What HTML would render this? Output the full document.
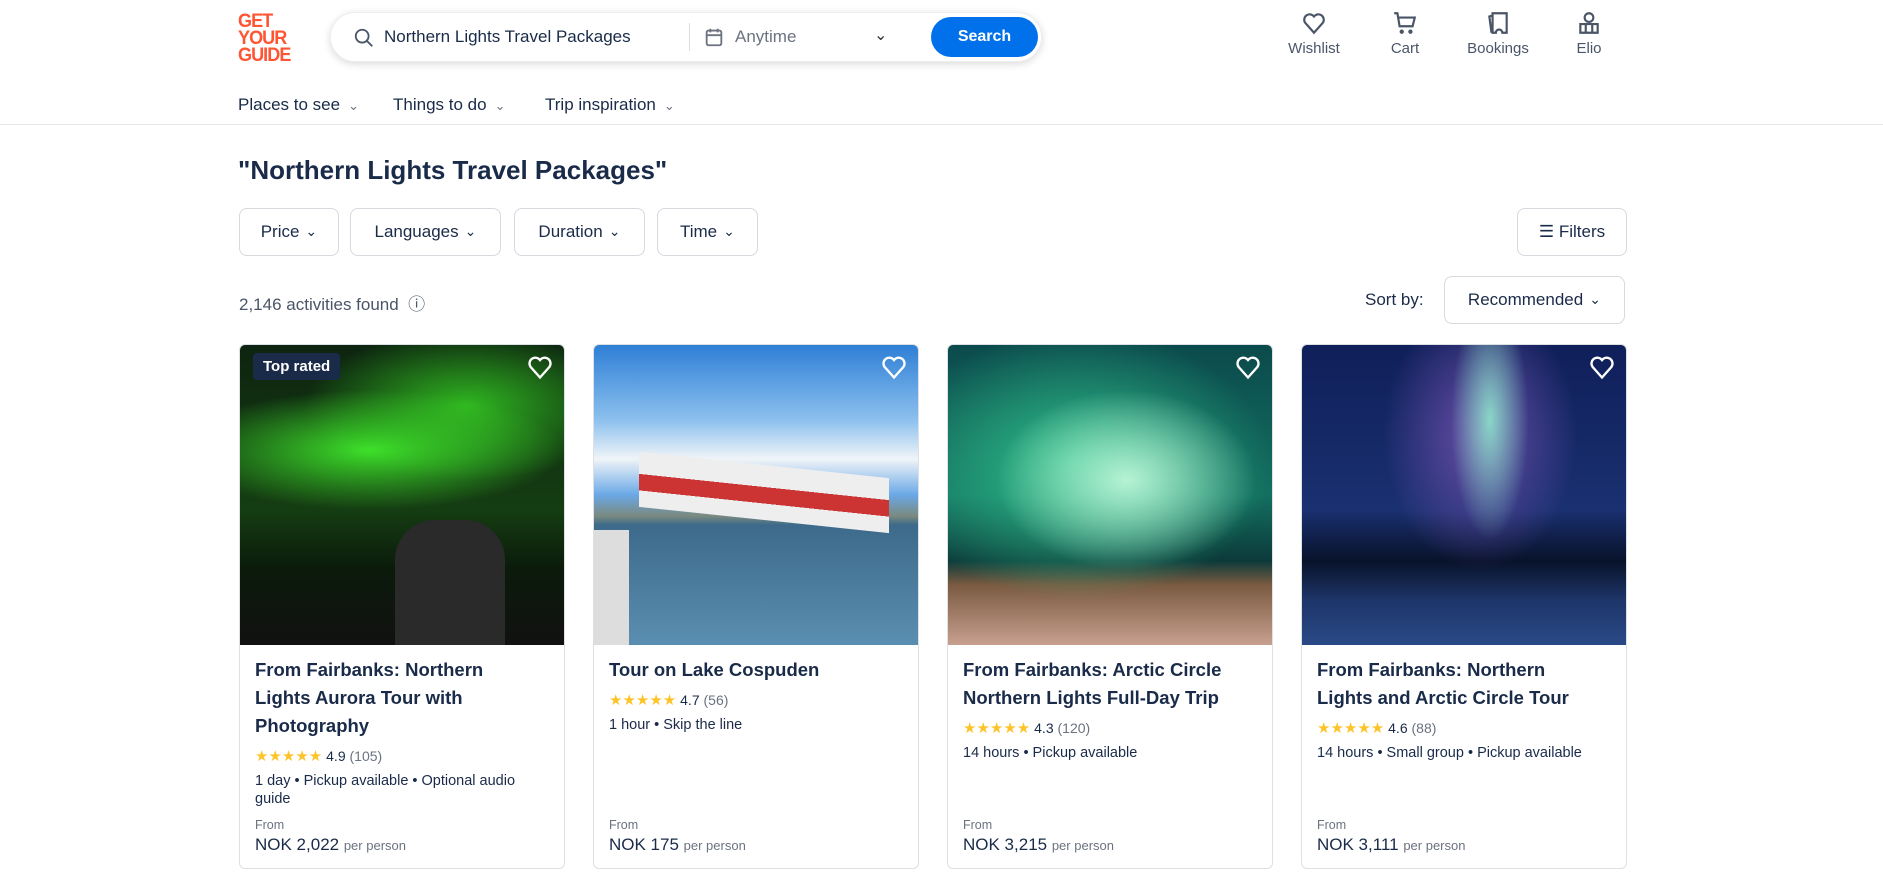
<!DOCTYPE html>
<html><head><meta charset="utf-8"><style>
*{box-sizing:border-box;margin:0;padding:0}
body{width:1883px;height:884px;overflow:hidden;background:#fff;font-family:"Liberation Sans",sans-serif;color:#1a2b49;position:relative}
.a{position:absolute}
.logo{left:238px;top:13px;color:#ff5533;font-weight:900;font-size:19px;line-height:17px;letter-spacing:-1px;transform:scaleX(0.95);transform-origin:left}
.search{left:330px;top:12px;width:712px;height:50px;border-radius:25px;box-shadow:0 2px 8px rgba(0,0,0,.15);border:1px solid #eee;background:#fff}
.nav{top:95px;font-size:17px}
.nav span{color:#6b7280;font-size:13px;margin-left:8px}
.hi{top:10px;text-align:center;font-size:15px;color:#4a5568;width:90px}
.hi svg{display:block;margin:0 auto 4px}
.btn{top:208px;height:48px;border:1px solid #d6d9de;border-radius:8px;font-size:17px;display:flex;align-items:center;justify-content:center;gap:6px}
.card{top:344px;width:326px;height:525px;border:1px solid #dcdfe4;border-radius:6px;overflow:hidden}
.img{height:300px;position:relative}
.ct{padding:11px 15px 0}
.t{font-weight:bold;font-size:18.5px;line-height:28px;white-space:nowrap}
.r{font-size:14px;margin-top:7px;color:#1a2b49}
.r b{color:#fdc42a;font-size:15px;letter-spacing:0;font-weight:normal}
.r i{font-style:normal;color:#6b7280}
.f{font-size:14.5px;margin-top:7px;line-height:18px;white-space:nowrap}
.fr{position:absolute;bottom:36px;left:15px;font-size:12.5px;color:#6b7280}
.p{position:absolute;bottom:13px;left:15px;font-size:17px}
.p span{font-size:13px;color:#6b7280}
.heart{position:absolute;right:10px;top:8px}
</style></head><body>
<div class="a logo">GET<br>YOUR<br>GUIDE</div>
<div class="a search">
<svg class="a" style="left:22px;top:14px" width="22" height="22" viewBox="0 0 24 24" fill="none" stroke="#4a5568" stroke-width="2"><circle cx="10" cy="10" r="7"/><path d="M15 15l6 6"/></svg>
<div class="a" style="left:53px;top:14px;font-size:17px">Northern Lights Travel Packages</div>
<div class="a" style="left:358px;top:10px;width:1px;height:28px;background:#ddd"></div>
<svg class="a" style="left:372px;top:13px" width="22" height="22" viewBox="0 0 24 24" fill="none" stroke="#6b7280" stroke-width="2"><rect x="4" y="5" width="16" height="16" rx="2"/><path d="M4 10h16M8 3v4M16 3v4"/></svg>
<div class="a" style="left:404px;top:14px;font-size:17px;color:#6b7280">Anytime</div>
<div class="a" style="left:543px;top:12px;font-size:16px;color:#333">&#8964;</div>
<div class="a" style="left:600px;top:4px;width:107px;height:40px;border-radius:20px;background:#0071eb;color:#fff;font-weight:bold;font-size:16px;text-align:center;line-height:40px">Search</div>
</div>
<div class="a nav" style="left:238px">Places to see<span>&#8964;</span></div>
<div class="a nav" style="left:393px">Things to do<span>&#8964;</span></div>
<div class="a nav" style="left:545px">Trip inspiration<span>&#8964;</span></div>
<div class="a hi" style="left:1269px"><svg width="26" height="26" viewBox="0 0 24 24" fill="none" stroke="#4a5568" stroke-width="2"><path d="M12 21l-8-9a5 5 0 018-6 5 5 0 018 6z"/></svg>Wishlist</div>
<div class="a hi" style="left:1360px"><svg width="26" height="26" viewBox="0 0 24 24" fill="none" stroke="#4a5568" stroke-width="2"><path d="M2 3h3l2 12h12l2-8H6"/><circle cx="9" cy="20" r="1"/><circle cx="17" cy="20" r="1"/></svg>Cart</div>
<div class="a hi" style="left:1453px"><svg width="26" height="26" viewBox="0 0 24 24" fill="none" stroke="#4a5568" stroke-width="2"><path d="M7 3h13v18h-4a3 3 0 00-6 0H7zM7 5L4 6l2 15"/></svg>Bookings</div>
<div class="a hi" style="left:1544px"><svg width="26" height="26" viewBox="0 0 24 24" fill="none" stroke="#4a5568" stroke-width="2"><circle cx="12" cy="7" r="4"/><path d="M4 21v-8h16v8zM9 13v8M15 13v8"/></svg>Elio</div>
<div class="a" style="left:0;top:124px;width:1883px;height:1px;background:#e4e6ea"></div>
<div class="a" style="left:238px;top:155px;font-size:26px;font-weight:bold">"Northern Lights Travel Packages"</div>
<div class="a btn" style="left:239px;width:100px">Price <small>&#8964;</small></div>
<div class="a btn" style="left:350px;width:151px">Languages <small>&#8964;</small></div>
<div class="a btn" style="left:514px;width:131px">Duration <small>&#8964;</small></div>
<div class="a btn" style="left:657px;width:101px">Time <small>&#8964;</small></div>
<div class="a btn" style="left:1517px;width:110px">&#9776; Filters</div>
<div class="a" style="left:239px;top:290px;font-size:17px;color:#4a5568">2,146 activities found &nbsp;&#9432;</div>
<div class="a" style="left:1365px;top:290px;font-size:17px">Sort by:</div>
<div class="a btn" style="left:1444px;top:276px;width:181px">Recommended <small>&#8964;</small></div>

<div class="a card" style="left:239px"><div class="img" style="background:radial-gradient(ellipse 60% 20% at 40% 35%,#3de02a,transparent),radial-gradient(ellipse 50% 25% at 70% 20%,#2fb520,transparent),linear-gradient(#0d2410,#153d12 55%,#0b1a0b 75%,#111 100%)">
<div class="a" style="left:13px;top:8px;background:#1a2b49;color:#fff;font-weight:bold;font-size:15px;padding:5px 10px;border-radius:4px">Top rated</div>
<div class="a" style="left:155px;top:175px;width:110px;height:125px;background:#2a2a2a;border-radius:40px 40px 0 0"></div>
<svg class="heart" width="28" height="28" viewBox="0 0 24 24" fill="none" stroke="#fff" stroke-width="2"><path d="M12 21l-8-9a5 5 0 018-6 5 5 0 018 6z"/></svg></div>
<div class="ct"><div class="t">From Fairbanks: Northern<br>Lights Aurora Tour with<br>Photography</div>
<div class="r"><b>★★★★★</b> 4.9 <i>(105)</i></div>
<div class="f">1 day • Pickup available • Optional audio<br>guide</div></div>
<div class="fr">From</div><div class="p">NOK 2,022 <span>per person</span></div></div>

<div class="a card" style="left:593px"><div class="img" style="background:linear-gradient(#2e7fd6,#8cc0ee 25%,#f0f4f8 38%,#6aa8e6 50%,#7a8a80 57%,#3d6a8a 60%,#5a8eb0 100%)">
<div class="a" style="left:45px;top:120px;width:250px;height:55px;background:linear-gradient(#eee 40%,#c33 40%,#c33 70%,#eee 70%);transform:skewY(6deg)"></div>
<div class="a" style="left:0;top:185px;width:35px;height:115px;background:#ddd"></div>
<svg class="heart" width="28" height="28" viewBox="0 0 24 24" fill="none" stroke="#fff" stroke-width="2"><path d="M12 21l-8-9a5 5 0 018-6 5 5 0 018 6z"/></svg></div>
<div class="ct"><div class="t">Tour on Lake Cospuden</div>
<div class="r"><b>★★★★★</b> 4.7 <i>(56)</i></div>
<div class="f">1 hour • Skip the line</div></div>
<div class="fr">From</div><div class="p">NOK 175 <span>per person</span></div></div>

<div class="a card" style="left:947px"><div class="img" style="background:radial-gradient(ellipse 40% 30% at 55% 45%,#b6f3d4,transparent),radial-gradient(ellipse 60% 45% at 40% 40%,#2fbf8a,transparent),linear-gradient(#0b4a4c,#137060 50%,#0c3a3a 72%,#7a5a40 80%,#c8a090 100%)">
<svg class="heart" width="28" height="28" viewBox="0 0 24 24" fill="none" stroke="#fff" stroke-width="2"><path d="M12 21l-8-9a5 5 0 018-6 5 5 0 018 6z"/></svg></div>
<div class="ct"><div class="t">From Fairbanks: Arctic Circle<br>Northern Lights Full-Day Trip</div>
<div class="r"><b>★★★★★</b> 4.3 <i>(120)</i></div>
<div class="f">14 hours • Pickup available</div></div>
<div class="fr">From</div><div class="p">NOK 3,215 <span>per person</span></div></div>

<div class="a card" style="left:1301px"><div class="img" style="background:radial-gradient(ellipse 12% 40% at 58% 25%,#8ad6c8,transparent),radial-gradient(ellipse 30% 45% at 55% 30%,#6a4ea8,transparent),linear-gradient(#0f1f5a,#1a3070 55%,#08122a 72%,#1d3568 85%,#2a4a88 100%)">
<svg class="heart" width="28" height="28" viewBox="0 0 24 24" fill="none" stroke="#fff" stroke-width="2"><path d="M12 21l-8-9a5 5 0 018-6 5 5 0 018 6z"/></svg></div>
<div class="ct"><div class="t">From Fairbanks: Northern<br>Lights and Arctic Circle Tour</div>
<div class="r"><b>★★★★★</b> 4.6 <i>(88)</i></div>
<div class="f">14 hours • Small group • Pickup available</div></div>
<div class="fr">From</div><div class="p">NOK 3,111 <span>per person</span></div></div>
</body></html>
